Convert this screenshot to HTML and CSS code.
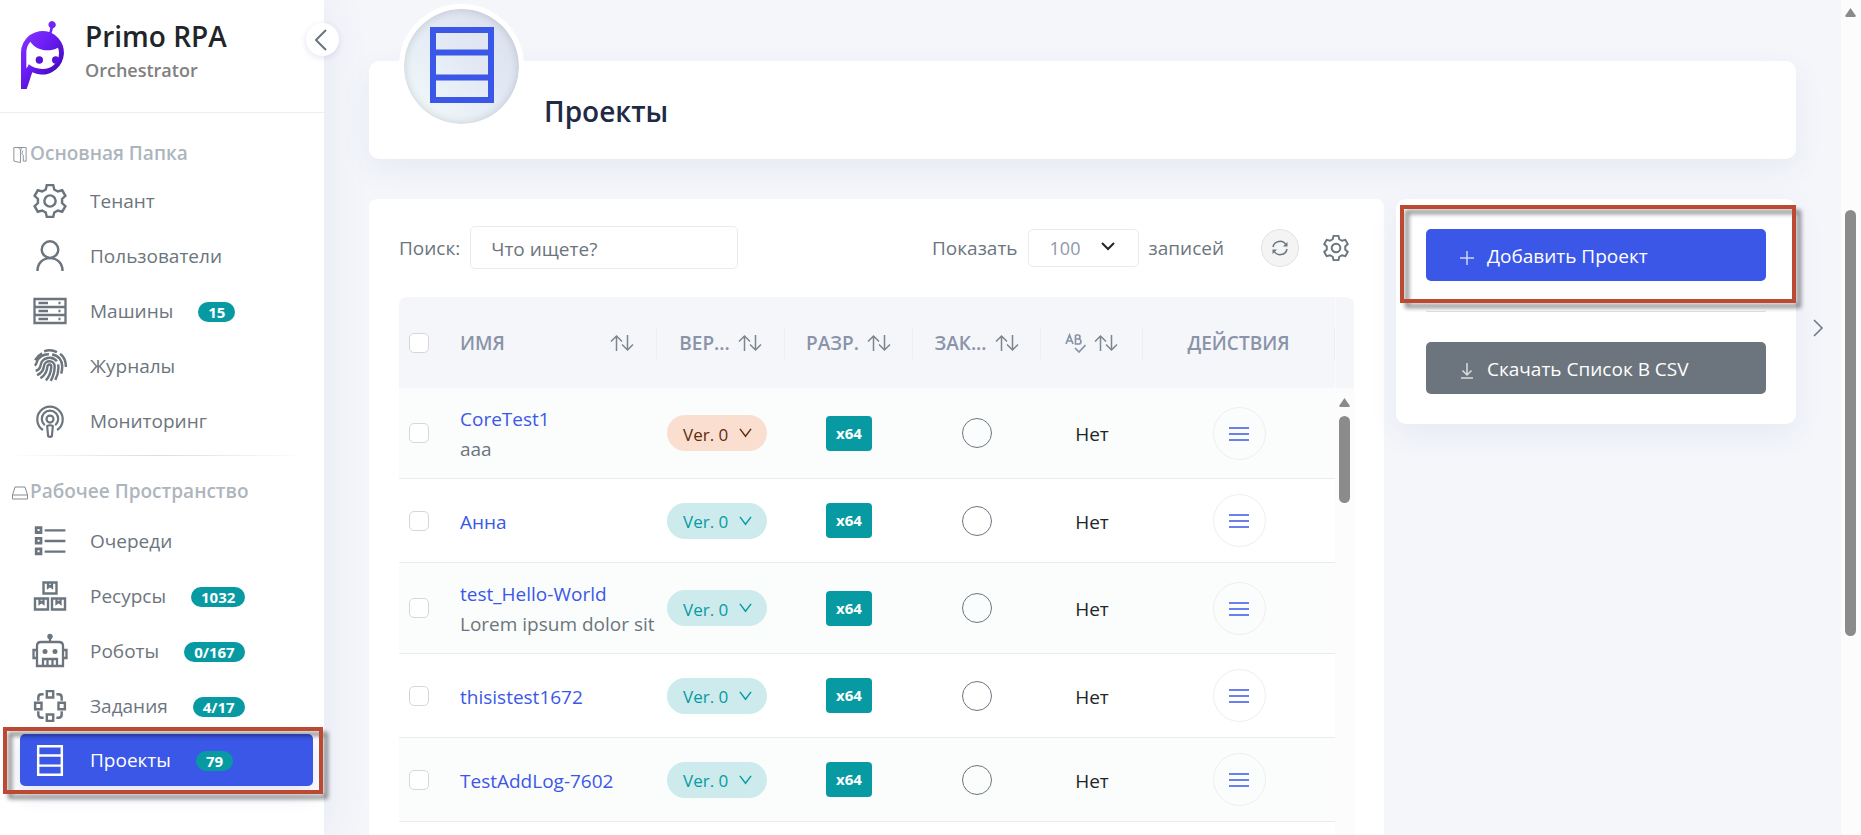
FILE: index.html
```html
<!DOCTYPE html>
<html lang="ru">
<head>
<meta charset="utf-8">
<title>Primo RPA Orchestrator — Проекты</title>
<link rel="stylesheet" href="styles.css">
</head>
<body>
<svg class="sprite" aria-hidden="true">
  <defs>
    <linearGradient id="logo-fill" x1="0" y1="0" x2="0.8" y2="1">
      <stop offset="0" stop-color="#8a3dff"/><stop offset="0.5" stop-color="#6a1cf5"/><stop offset="1" stop-color="#3a06a8"/>
    </linearGradient>
    <symbol id="gear" viewBox="0 0 32 32"><path d="M13 1h6l1 4.2 3.35 1.9 4.15-1.2 3 5.2-3.15 3v3.8l3.15 3-3 5.2-4.15-1.2L20 26.8 19 31h-6l-1-4.2-3.35-1.9-4.15 1.2-3-5.2 3.15-3v-3.8l-3.15-3 3-5.2 4.15 1.2L12 5.2z"/><circle cx="16" cy="16" r="5.3"/></symbol>
    <symbol id="user" viewBox="0 0 32 32"><circle cx="16" cy="10" r="7.8"/><path d="M4.2 30c0-7 5-12 11.800-12s11.800 5 11.800 12"/></symbol>
    <symbol id="server" viewBox="0 0 34 34"><path d="M1.500 5h31v24h-31zM1.500 13h31M1.500 21h31"/><path d="M5.500 9H15M5.500 17H15M5.500 25H15M25.500 9h2M25.500 17h2M25.500 25h2"/></symbol>
    <symbol id="finger" viewBox="0 0 32 32"><path d="M10.500 2.200A14.500 14.500 0 0 1 22.500 3M2 10.500A15 15 0 0 1 8.500 4M25.500 4.500C29.500 7.500 31 12 31 17M1.500 15.500c1.200-.5 1.700-1 2-3C5 7.500 10 4.800 15 5M18 5.200c6 .8 9.500 5.500 9.500 11 0 3-.3 5-1 7M2.500 20.500c3-.8 4.200-2.500 4.700-5.500.5-4.500 4.500-7 9-6.800 3 .2 5 1.500 6.300 3.300M23.700 14.500c.8 5.500-.2 10-2.700 14.500M3.800 24.500c4-1.500 6-4.500 6.600-8.500.6-6 10-6 10 .5 0 5-1.200 9-3.700 13.500M7 27.500c4-2.500 6-6 6.600-11 .4-2.800 3.700-2.300 3.600.5-.3 4.700-2 9-5 12.500"/></symbol>
    <symbol id="monitor" viewBox="0 0 32 36"><path d="M8.500 27.500a13.500 13.500 0 1 1 15 0M10.500 22.500a8.700 8.700 0 1 1 11 0"/><circle cx="16" cy="16" r="3.700"/><path d="M13 23.500c1.500-1.300 4.500-1.300 6 0l-1 10.500c-1 1-3 1-4 0z"/></symbol>
    <symbol id="queue" viewBox="0 0 32 32"><path stroke-width="2.600" d="M3 3.500h4.500V8H3zM3 13.500h4.500V18H3zM3 23.500h4.500V28H3z"/><path d="M11 6h19.500M11 16h19.500M11 26h19.500"/></symbol>
    <symbol id="boxes" viewBox="0 0 34 34"><path stroke-width="2.400" d="M10.500 3.500h13v11h-13zM2 19.500h13v11H2zM19 19.500h13v11H19z"/><path d="M15 3.500v5l2-1.500 2 1.500v-5M6.500 19.500v5l2-1.500 2 1.500v-5M23.500 19.500v5l2-1.500 2 1.500v-5"/></symbol>
    <symbol id="robot" viewBox="0 0 36 36"><path d="M5 33V13q0-4 4-4h18q4 0 4 4v20zM5 17H1.500v8H5M31 17h3.500v8H31M18 8V4M11 33v-7h14v7M15.500 26v7M20.500 26v7"/><g fill="currentColor" stroke="none"><circle cx="18" cy="3.500" r="2.700"/><circle cx="13" cy="18.500" r="2.500"/><circle cx="23" cy="18.500" r="2.500"/></g></symbol>
    <symbol id="tasks" viewBox="0 0 32 32"><path d="M13 2h6v6h-6zM13 24h6v6h-6zM2 13h6v6H2zM24 13h6v6h-6zM10 5H8Q5 5 5 8v3M22 5h2q3 0 3 3v3M5 21v3q0 3 3 3h2M27 21v3q0 3-3 3h-2"/></symbol>
    <symbol id="shelf" viewBox="0 0 64 76"><path d="M3 3h58v70H3zM3 25.500h58M3 50.500h58"/></symbol>
    <symbol id="sort" viewBox="0 0 24 18"><path d="M6.500 17V2M1 7.500L6.500 2 12 7.500M17.500 1v15M12 10.500l5.500 5.500 5.500-5.500"/></symbol>
    <symbol id="down" viewBox="0 0 14 10"><path d="M1 .5l6 8 6-8"/></symbol>
    <symbol id="menu" viewBox="0 0 20 16"><path d="M0 2h20M0 8h20M0 14h20"/></symbol>
  </defs>
</svg>

<div class="app">
  <aside class="sidebar">
    <header class="brand">
      <svg class="logo" viewBox="60 60 138 210" role="img" aria-label="Primo">
        <path fill="url(#logo-fill)" d="M63 267V158a65 65 0 0 1 85-62l3-12a11 11 0 1 1 8 1l-4 14a65 65 0 0 1-58 118c-5 12-10 33-17 50zM91 125c-9 10-12 20-12 34v46c3-3 6-7 7-12 12 9 24 14 42 14 26 0 49-17 49-48 0-6-1-11-3-16-30 15-65 8-83-18z"/>
        <g fill="#5512df"><circle cx="118" cy="180" r="11"/><circle cx="167" cy="180" r="11"/></g>
      </svg>
      <div>
        <div class="brand-name">Primo RPA</div>
        <div class="brand-sub">Orchestrator</div>
      </div>
      <button class="collapse" type="button" aria-label="Свернуть меню"><svg viewBox="0 0 12 22"><path d="M11 1L1 11l10 10"/></svg></button>
    </header>
    <nav>
      <h2 class="group"><svg viewBox="0 0 14 17"><path d="M.5.500h13v14.500h-3M.5.500V15l7 1.500V3L5 .500M7.500 5l1-4.500M10.500 15V9L9 7l1-3"/></svg>Основная Папка</h2>
      <ul class="menu">
        <li><a href="#"><svg class="ico"><use href="#gear"/></svg>Тенант</a></li>
        <li><a href="#"><svg class="ico"><use href="#user"/></svg>Пользователи</a></li>
        <li><a href="#"><svg class="ico"><use href="#server"/></svg>Машины<span class="badge">15</span></a></li>
        <li><a href="#"><svg class="ico"><use href="#finger"/></svg>Журналы</a></li>
        <li><a href="#"><svg class="ico"><use href="#monitor"/></svg>Мониторинг</a></li>
      </ul>
      <hr class="fade">
      <h2 class="group"><svg viewBox="0 0 16 13"><path d="M.5 8.500L3 .500h10l2.500 8v4H.5zM.5 8.500h15"/></svg>Рабочее Пространство</h2>
      <ul class="menu">
        <li><a href="#"><svg class="ico"><use href="#queue"/></svg>Очереди</a></li>
        <li><a href="#"><svg class="ico"><use href="#boxes"/></svg>Ресурсы<span class="badge">1032</span></a></li>
        <li><a href="#"><svg class="ico ico-lg"><use href="#robot"/></svg>Роботы<span class="badge">0/167</span></a></li>
        <li><a href="#"><svg class="ico"><use href="#tasks"/></svg>Задания<span class="badge">4/17</span></a></li>
        <li class="marked"><a class="active" href="#"><svg class="ico ico-shelf"><use href="#shelf"/></svg>Проекты<span class="badge">79</span></a><span class="callout callout-nav"></span></li>
      </ul>
    </nav>
  </aside>

  <main>
    <section class="title-card">
      <div class="avatar"><svg><use href="#shelf"/></svg></div>
      <h1>Проекты</h1>
    </section>

    <div class="columns">
      <section class="list-card">
        <div class="tools">
          <label for="q">Поиск:</label>
          <input id="q" class="search" type="text" placeholder="Что ищете?">
          <div class="tools-right">
            <label for="size">Показать</label>
            <span class="select"><select id="size"><option>100</option></select><svg viewBox="0 0 14 9"><path d="M1 1l6 6 6-6"/></svg></span>
            <span>записей</span>
            <button class="refresh" type="button" aria-label="Обновить"><svg viewBox="0 0 16 16"><path d="M1 7a7 7 0 0 1 13-2M15 9a7 7 0 0 1-13 2"/><path class="solid" d="M15.500 2v4.500H11zM.5 14V9.500H5z"/></svg></button>
            <button class="settings" type="button" aria-label="Настройки"><svg><use href="#gear"/></svg></button>
          </div>
        </div>

        <table>
          <colgroup><col class="c-check"><col><col class="c-mid"><col class="c-mid"><col class="c-mid"><col class="c-ab"><col class="c-act"><col class="c-bar"></colgroup>
          <thead>
            <tr>
              <th><input type="checkbox" aria-label="Выбрать все"></th>
              <th><div class="head head-name">ИМЯ<svg class="sort"><use href="#sort"/></svg></div></th>
              <th><div class="head">ВЕР...<svg class="sort"><use href="#sort"/></svg></div></th>
              <th><div class="head">РАЗР.<svg class="sort"><use href="#sort"/></svg></div></th>
              <th><div class="head">ЗАК...<svg class="sort"><use href="#sort"/></svg></div></th>
              <th><div class="head"><svg class="ab" viewBox="0 0 21 20" role="img" aria-label="Проверка"><path d="M1 11L4.500 2 8 11M2 8h5M10.500 2v9h3a2.500 2.500 0 0 0 0-5h-3M10.500 2h2.500a2 2 0 0 1 0 4M10 15l4 4 6.500-7"/></svg><svg class="sort"><use href="#sort"/></svg></div></th>
              <th><div class="head">ДЕЙСТВИЯ</div></th>
              <th></th>
            </tr>
          </thead>
          <tbody>
            <tr class="tall">
              <td><input type="checkbox" aria-label="CoreTest1"></td>
              <td><a href="#">CoreTest1</a><div>aaa</div></td>
              <td><button class="ver ver-warn" type="button">Ver. 0<svg><use href="#down"/></svg></button></td>
              <td><span class="arch">x64</span></td>
              <td><span class="ring"></span></td>
              <td class="no">Нет</td>
              <td><button class="act" type="button" aria-label="Действия"><svg><use href="#menu"/></svg></button></td>
              <td class="bar" rowspan="6"><div class="arrow"></div><div class="thumb"></div></td>
            </tr>
            <tr>
              <td><input type="checkbox" aria-label="Анна"></td>
              <td><a href="#">Анна</a></td>
              <td><button class="ver" type="button">Ver. 0<svg><use href="#down"/></svg></button></td>
              <td><span class="arch">x64</span></td>
              <td><span class="ring"></span></td>
              <td class="no">Нет</td>
              <td><button class="act" type="button" aria-label="Действия"><svg><use href="#menu"/></svg></button></td>
            </tr>
            <tr class="tall">
              <td><input type="checkbox" aria-label="test_Hello-World"></td>
              <td><a href="#">test_Hello-World</a><div>Lorem ipsum dolor sit</div></td>
              <td><button class="ver" type="button">Ver. 0<svg><use href="#down"/></svg></button></td>
              <td><span class="arch">x64</span></td>
              <td><span class="ring"></span></td>
              <td class="no">Нет</td>
              <td><button class="act" type="button" aria-label="Действия"><svg><use href="#menu"/></svg></button></td>
            </tr>
            <tr>
              <td><input type="checkbox" aria-label="thisistest1672"></td>
              <td><a href="#">thisistest1672</a></td>
              <td><button class="ver" type="button">Ver. 0<svg><use href="#down"/></svg></button></td>
              <td><span class="arch">x64</span></td>
              <td><span class="ring"></span></td>
              <td class="no">Нет</td>
              <td><button class="act" type="button" aria-label="Действия"><svg><use href="#menu"/></svg></button></td>
            </tr>
            <tr>
              <td><input type="checkbox" aria-label="TestAddLog-7602"></td>
              <td><a href="#">TestAddLog-7602</a></td>
              <td><button class="ver" type="button">Ver. 0<svg><use href="#down"/></svg></button></td>
              <td><span class="arch">x64</span></td>
              <td><span class="ring"></span></td>
              <td class="no">Нет</td>
              <td><button class="act" type="button" aria-label="Действия"><svg><use href="#menu"/></svg></button></td>
            </tr>
            <tr><td colspan="7"></td></tr>
          </tbody>
        </table>
      </section>

      <aside class="side-card">
        <div class="marked">
          <button class="btn btn-primary" type="button"><svg viewBox="0 0 14 14"><path d="M7 0v14M0 7h14"/></svg>Добавить Проект</button>
          <span class="callout callout-add"></span>
        </div>
        <hr>
        <button class="btn btn-grey" type="button"><svg viewBox="0 0 14 16"><path d="M7 0v12M2.500 7.500L7 12l4.500-4.500M1 15h12"/></svg>Скачать Список В CSV</button>
      </aside>
      <button class="expand" type="button" aria-label="Скрыть панель"><svg viewBox="0 0 11 18"><path d="M1 1l8 8-8 8"/></svg></button>
    </div>
  </main>

  <div class="page-bar" aria-hidden="true"><div class="arrow"></div><div class="page-thumb"></div></div>
</div>
</body>
</html>
```

FILE: styles.css
```css
* { box-sizing: border-box; }

body {
  margin: 0;
  background: #f4f6fa;
  color: #6c757d;
  font-family: "Open Sans", "Noto Sans", sans-serif;
  font-size: 19px;
  line-height: 30px;
}

button, input, select { font: inherit; color: inherit; }
button { padding: 0; border: 0; background: none; cursor: pointer; }
a { color: inherit; text-decoration: none; }
svg { display: block; flex: none; fill: none; stroke: currentColor; }
h1, h2, ul { margin: 0; padding: 0; }
.sprite { position: absolute; width: 0; height: 0; }

.app { display: flex; height: 100vh; overflow: hidden; }

/* Sidebar */
.sidebar {
  position: relative;
  z-index: 2;
  flex: 0 0 324px;
  background: #fff;
  box-shadow: 0 0 45px rgba(60, 70, 170, .08);
}
.brand {
  position: relative;
  display: flex;
  gap: 19px;
  height: 113px;
  padding: 19px 20px 0;
  border-bottom: 1px solid #eee;
}
.logo { width: 46px; height: 70px; margin-top: 1px; stroke: none; }
.brand-name { color: #212529; font-size: 28px; font-weight: 600; line-height: 34px; }
.brand-sub { color: #808080; font-size: 18px; font-weight: 600; line-height: 34px; }
.collapse {
  position: absolute;
  right: -15px;
  top: 23px;
  display: grid;
  place-items: center;
  width: 33px;
  height: 33px;
  border-radius: 50%;
  background: #fff;
  box-shadow: 0 2px 6px rgba(60, 70, 170, .14);
}
.collapse svg { width: 12px; height: 22px; stroke-width: 2; margin-right: 4px; }

.group {
  display: flex;
  align-items: center;
  padding: 24px 0 5px 12px;
  color: #adb5bd;
  font-size: 19px;
  font-weight: 600;
  line-height: 32px;
}
.group svg { width: 16px; height: 16px; margin: 3px 2px 0 0; stroke: #868e96; }
.menu { display: grid; gap: 3px; padding: 0 11px 0 20px; list-style: none; }
.menu a {
  display: flex;
  align-items: center;
  height: 52px;
  padding: 2px 0 0 12px;
  border-radius: 5px;
}
.menu .active { padding-top: 0; background: #3b57e8; color: #fff; box-shadow: 0 8px 20px rgba(60, 70, 170, .14); }
.ico { width: 34px; height: 34px; margin: 0 23px 0 1px; stroke-width: 2.3; }
.ico-lg { width: 36px; height: 36px; margin: 0 22px 0 0; }
.ico-shelf { height: 31px; stroke-width: 6; }
.badge {
  margin: 2px 0 0 25px;
  padding: 0 10px;
  border-radius: 10px;
  background: #079aa2;
  color: #fff;
  font-size: 15px;
  font-weight: 700;
  line-height: 20px;
}
.fade {
  height: 1px;
  margin: 9px 16px 0 8px;
  border: 0;
  background: linear-gradient(90deg, transparent, #ddd, transparent);
}
.fade + .group { padding-top: 19px; padding-bottom: 7px; }

.marked { position: relative; }
.callout {
  position: absolute;
  border: 4px solid #bc4a33;
  filter: drop-shadow(5px 5px 2px rgba(0, 0, 0, .45));
  pointer-events: none;
}
.callout-nav { inset: -7px -10px -8px -17px; }
.callout-add { inset: -24px -30px -22px -26px; }

/* Main */
main { flex: 1; min-width: 0; padding: 61px 0 0 45px; }
.title-card {
  display: flex;
  align-items: flex-start;
  gap: 20px;
  height: 98px;
  margin-right: 45px;
  padding-left: 30px;
  border-radius: 10px;
  background: #fff;
  box-shadow: 0 10px 30px rgba(60, 70, 170, .07);
}
.avatar {
  display: grid;
  place-items: center;
  width: 125px;
  height: 125px;
  margin-top: -57px;
  border: 5px solid #fff;
  border-radius: 50%;
  background: linear-gradient(45deg, #f3fcfc, #e4ebf5 50%, #d9dded);
  background-clip: padding-box;
  box-shadow: inset 0 0 10px rgba(0, 0, 0, .16);
  color: #3b57e8;
}
.avatar svg { width: 64px; height: 76px; margin-bottom: 3px; stroke-width: 6; }
h1 { padding-top: 30px; color: #1f2a44; font-size: 28px; font-weight: 600; line-height: 40px; }

.columns { display: flex; align-items: flex-start; margin-top: 40px; }
.list-card { flex: 1; min-width: 0; min-height: 640px; padding: 27px 30px 0; border-radius: 8px; background: #fff; }
.tools { display: flex; align-items: center; gap: 10px; height: 43px; white-space: nowrap; }
.tools label, .tools-right > span { padding-top: 1px; }
.search { width: 268px; height: 43px; padding: 2px 20px 0; border: 1px solid #e9ebee; border-radius: 5px; background: #fff; }
.search::placeholder { color: #6c757d; opacity: 1; }
.tools-right { display: flex; align-items: center; gap: 10px; margin-left: auto; }
.select { position: relative; display: block; }
.select select {
  display: block;
  width: 111px;
  height: 38px;
  padding: 0 21px;
  border: 1px solid #e9ebee;
  border-radius: 5px;
  background: #fff;
  color: #8f97ab;
  font-size: 18px;
  appearance: none;
}
.select svg { position: absolute; right: 24px; top: 14px; width: 14px; height: 9px; color: #212529; stroke-width: 2; pointer-events: none; }
.refresh { display: grid; place-items: center; width: 38px; height: 38px; margin: 0 14px 0 27px; border: 1px solid #e2e2e2; border-radius: 50%; background: #f4f4f4; }
.refresh svg { width: 16px; height: 16px; stroke-width: 1.5; }
.refresh .solid { fill: currentColor; stroke: none; }
.settings { margin-right: 5px; }
.settings svg { width: 26px; height: 26px; stroke-width: 2.4; }

table { width: 100%; margin-top: 28px; border-collapse: separate; border-spacing: 0; table-layout: fixed; }
.c-check { width: 61px; }
.c-mid { width: 128px; }
.c-ab { width: 102px; }
.c-act { width: 192px; }
.c-bar { width: 19px; }
th { height: 91px; padding: 0; background: #f4f6fa; color: #8a93a8; font-size: 19px; font-weight: 600; }
th:last-child { border-left: 1px solid #fafafc; border-radius: 0 8px 0 0; }
.head { display: flex; align-items: center; justify-content: center; gap: 8px; height: 32px; border-right: 1px solid #eceef0; }
.head-name { justify-content: space-between; padding-right: 22px; }
.sort { width: 24px; height: 18px; color: #7d858d; stroke-width: 1.5; }
.ab { width: 21px; height: 20px; stroke-width: 1.7; }
th:first-child { border-radius: 8px 0 0 0; }
th:first-child, td:first-child { padding-left: 10px; text-align: left; }

td { height: 84px; padding: 0; border-bottom: 1px solid #e9ebec; text-align: center; }
.tall td { height: 91px; }
td:nth-child(2) { padding-top: 2px; text-align: left; white-space: nowrap; }
td:nth-child(3) { padding-left: 10px; text-align: left; }
td a { color: #3b57e8; }
tbody tr:nth-child(odd) { background: #fbfdfc; }
td.no { padding-top: 2px; color: #212529; }
input[type=checkbox] {
  display: block;
  width: 20px;
  height: 20px;
  margin: 0;
  border: 1px solid #d5d8da;
  border-radius: 5px;
  background: #fff;
  appearance: none;
}
.ver {
  position: relative;
  z-index: 1;
  display: flex;
  align-items: center;
  justify-content: space-between;
  width: 100px;
  height: 36px;
  padding: 3px 15px 0 16px;
  border-radius: 18px;
  background: #cdebec;
  color: #079aa2;
  font-size: 17px;
}
.ver-warn { background: #fadfd1; color: #5f2b0d; }
.ver svg { width: 13px; height: 10px; margin-bottom: 3px; stroke-width: 1.5; }
.arch { display: inline-block; width: 46px; border-radius: 4px; background: #079aa2; color: #fff; font-size: 15px; font-weight: 700; line-height: 35px; }
.ring { display: block; width: 30px; height: 30px; margin: 0 auto; border: 1px solid #6c757d; border-radius: 50%; }
.act { display: grid; place-items: center; width: 53px; height: 53px; margin: 0 auto; border: 1px solid #eee; border-radius: 50%; color: #3b57e8; }
.act svg { width: 20px; height: 16px; margin-top: 1px; stroke-width: 1.6; }
td.bar { padding: 10px 4px 0; border: 0; background: #fcfcfc; vertical-align: top; }
.arrow { width: 11px; height: 9px; background: #8b8b8b; clip-path: polygon(50% 0, 100% 90%, 90% 100%, 10% 100%, 0 90%); }
.thumb { width: 11px; height: 87px; margin-top: 9px; border-radius: 6px; background: #8b8b8b; }

.side-card { width: 400px; margin-left: 12px; padding: 30px; border-radius: 10px; background: #fff; box-shadow: 0 10px 30px rgba(60, 70, 170, .07); }
.side-card hr { height: 1px; margin: 30px 0; border: 0; background: #dfe1e3; }
.btn { display: flex; align-items: center; gap: 13px; width: 100%; height: 52px; padding: 2px 34px 0; border-radius: 5px; color: #fff; }
.btn svg { width: 14px; height: 16px; opacity: .75; stroke-width: 1.5; margin-top: 3px; }
.btn-primary { background: #3b57e8; }
.btn-grey { background: #6c757d; }
.expand { display: flex; justify-content: center; width: 45px; margin-top: 120px; }
.expand svg { width: 11px; height: 18px; stroke-width: 1.5; }

.page-bar { flex: 0 0 20px; padding: 8px 0 0 4px; background: #fcfcfc; }
.page-thumb { width: 11px; height: 426px; margin-top: 193px; border-radius: 6px; background: #8b8b8b; }
```
